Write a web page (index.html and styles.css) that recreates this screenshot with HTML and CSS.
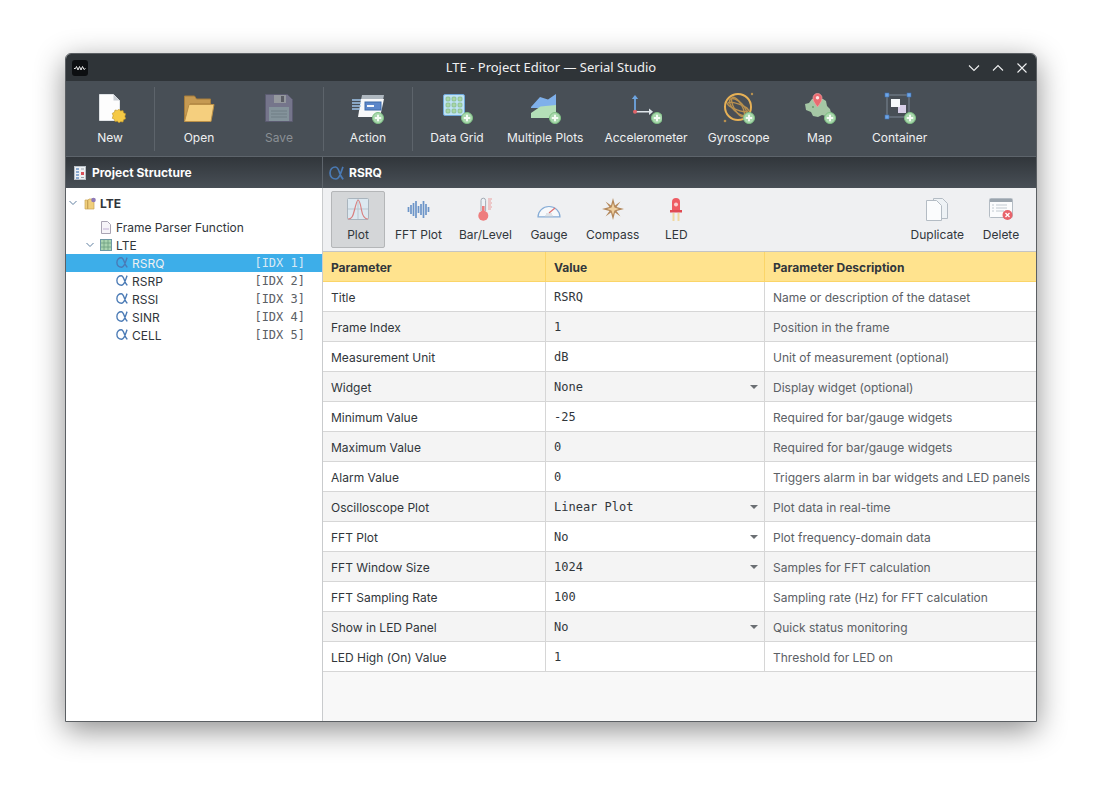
FILE: index.html
```html
<!DOCTYPE html>
<html lang="en">
<head>
<meta charset="UTF-8" />
<title>LTE - Project Editor — Serial Studio</title>
<link rel="stylesheet" href="styles.css">
</head>
<body>

<svg class="defs" width="0" height="0">
  <defs>
    <symbol id="plus" viewBox="0 0 12 12">
      <circle cx="6" cy="6" r="5.5" fill="#a9d8ad" stroke="#7fc084" stroke-width="1"/>
      <path d="M6 2.800v6.400M2.800 6h6.400" stroke="#f4fbf4" stroke-width="2"/>
    </symbol>
    <symbol id="alpha" viewBox="0 0 15 14">
      <path d="M14 .8C12.500 4 11 13 7 13 3.500 13 1 11 1 7S3.500 1 6.500 1c4 0 3.800 9.500 7.800 12.200" fill="none" stroke="#4a7ab5" stroke-width="1.700"/>
    </symbol>
  </defs>
</svg>

<div class="window">

  <div class="titlebar">
    <svg class="app-icon" width="16" height="16" viewBox="0 0 16 16">
      <rect width="16" height="16" rx="3" fill="#0d0f11"/>
      <path d="M2 8.500l1.500 0 1-2 1.500 3.500 1.500-3.500 1.500 3.500 1.500-3.500 1.500 3 1.500-1" fill="none" stroke="#e8e8e8" stroke-width="1"/>
    </svg>
    <span class="title">LTE - Project Editor — Serial Studio</span>
    <div class="controls">
      <svg width="12" height="12" viewBox="0 0 12 12"><path d="M1 3.500l5 5 5-5" fill="none" stroke="#eff0f1" stroke-width="1.100"/></svg>
      <svg width="12" height="12" viewBox="0 0 12 12"><path d="M1 8.500l5-5 5 5" fill="none" stroke="#eff0f1" stroke-width="1.100"/></svg>
      <svg width="12" height="12" viewBox="0 0 12 12"><path d="M1.500 1.500l9 9M10.500 1.500l-9 9" fill="none" stroke="#eff0f1" stroke-width="1.100"/></svg>
    </div>
  </div>

  <div class="toolbar">
    <div class="tool">
      <svg width="32" height="32" viewBox="0 0 32 32">
        <path d="M5.500 2.500h14l6 6v20h-20z" fill="#fdfdfd" stroke="#dfe3e6"/>
        <path d="M19.500 2.500v6h6z" fill="#c9ced3"/>
        <path d="M25 18l1.700 1.600 2.300-.4.600 2.300 2.100 1-.8 2.500.8 2.500-2.100 1-.6 2.300-2.300-.4L25 31.500l-1.700-1.600-2.300.4-.6-2.300-2.100-1 .8-2.500-.8-2.500 2.100-1 .6-2.300 2.300.4z" fill="#f5c945" stroke="#b8902a" stroke-width=".6" transform="translate(0 -.7)"/>
      </svg>
      <span>New</span>
    </div>
    <div class="sep"></div>
    <div class="tool">
      <svg width="32" height="32" viewBox="0 0 32 32">
        <path d="M1.500 28V4h10l2 3h14v5H7z" fill="#c69a52" stroke="#a67c3a"/>
        <path d="M1.500 29.500L6 12.500h25l-3 17z" fill="#f5cf7e" stroke="#bb9048"/>
      </svg>
      <span>Open</span>
    </div>
    <div class="tool is-off">
      <svg width="32" height="32" viewBox="0 0 32 32">
        <path d="M2.500 2.500h22l5 5v22h-27z" fill="#7d7c95" stroke="#5f5e75"/>
        <rect x="11" y="3" width="12" height="8" fill="#a2a5aa"/>
        <rect x="18" y="4" width="3" height="6" fill="#5f6068"/>
        <rect x="6" y="15" width="20" height="14" fill="#8fa0a8"/>
        <path d="M8 19h16M8 22h16M8 25h16" stroke="#76868e"/>
      </svg>
      <span>Save</span>
    </div>
    <div class="sep"></div>
    <div class="tool">
      <svg width="32" height="32" viewBox="0 0 32 32">
        <path d="M10 3h22l-1 5H9z" fill="#aeb7bf"/>
        <path d="M9 7h23l-4 18H6z" fill="#f7f8f9"/>
        <rect x="13" y="10" width="16" height="8" fill="#5b86c9" stroke="#3f6aa8"/>
        <rect x="15" y="13" width="7" height="2" fill="#f4f7fb"/>
        <path d="M0 8h9M0 11h9M0 14h9M0 17h8" stroke="#9fc5ea" stroke-width="1.600"/>
        <use href="#plus" x="20" y="20" width="12" height="12"/>
      </svg>
      <span>Action</span>
    </div>
    <div class="sep"></div>
    <div class="tool">
      <svg width="32" height="32" viewBox="0 0 32 32">
        <rect x="2.500" y="2.500" width="21" height="21" rx="1.500" fill="#bfe3f4" stroke="#6ea6d8"/>
        <g fill="#a8d6a8" stroke="#79b27e" stroke-width=".6">
          <rect x="5" y="5" width="4" height="4" rx="1"/><rect x="11" y="5" width="4" height="4" rx="1"/><rect x="17" y="5" width="4" height="4" rx="1"/>
          <rect x="5" y="11" width="4" height="4" rx="1"/><rect x="11" y="11" width="4" height="4" rx="1"/><rect x="17" y="11" width="4" height="4" rx="1"/>
          <rect x="5" y="17" width="4" height="4" rx="1"/><rect x="11" y="17" width="4" height="4" rx="1"/><rect x="17" y="17" width="4" height="4" rx="1"/>
        </g>
        <use href="#plus" x="20" y="20" width="12" height="12"/>
      </svg>
      <span>Data Grid</span>
    </div>
    <div class="tool tool-wide">
      <svg width="32" height="32" viewBox="0 0 32 32">
        <path d="M2 15l9-10 8 2.500L27 2v14H2z" fill="#7fb0ea"/>
        <path d="M2 21l9.500-6.500L27 13v13H2z" fill="#b4dfb8"/>
        <use href="#plus" x="20" y="20" width="12" height="12"/>
      </svg>
      <span>Multiple Plots</span>
    </div>
    <div class="tool">
      <svg width="32" height="32" viewBox="0 0 32 32">
        <path d="M5 20V6" stroke="#6ea5e0" stroke-width="1.800"/>
        <path d="M5 3l3.200 4h-6.400z" fill="#6ea5e0"/>
        <path d="M5 19.700h14" stroke="#dfe5ea" stroke-width="1.600"/>
        <path d="M23 19.700l-4-3.200v6.400z" fill="#dfe5ea"/>
        <circle cx="5" cy="19.700" r="2" fill="#e0646a"/>
        <use href="#plus" x="21" y="20" width="12" height="12"/>
      </svg>
      <span>Accelerometer</span>
    </div>
    <div class="tool">
      <svg width="32" height="32" viewBox="0 0 32 32">
        <circle cx="15" cy="15" r="13" fill="#4a4f55" stroke="#e7b156" stroke-width="2"/>
        <ellipse cx="15" cy="15" rx="11" ry="5" transform="rotate(45 15 15)" fill="none" stroke="#b8904f" stroke-width="1.400"/>
        <ellipse cx="15" cy="15" rx="11" ry="3" transform="rotate(20 15 15)" fill="none" stroke="#b8904f" stroke-width="1.400"/>
        <ellipse cx="15" cy="15" rx="4" ry="11" transform="rotate(-30 15 15)" fill="none" stroke="#b8904f" stroke-width="1.400"/>
        <circle cx="2" cy="29" r="1.300" fill="#b8904f"/>
        <circle cx="29" cy="2" r="1.200" fill="#b8904f"/>
        <use href="#plus" x="20" y="20" width="12" height="12"/>
      </svg>
      <span>Gyroscope</span>
    </div>
    <div class="tool">
      <svg width="32" height="32" viewBox="0 0 32 32">
        <path d="M1 12l4-1 3-4 5-1 6 1 3 2 1 5 3 3 1 4-5 3-4-1-4 2-5-1-2-4-5-2z" fill="#a5c7a5"/>
        <circle cx="9" cy="15" r="1" fill="#6b9a6f"/>
        <path d="M13.500 15c-3-4-4.500-6.500-4.500-9a4.500 4.500 0 0 1 9 0c0 2.500-1.500 5-4.500 9z" fill="#ea6a70" stroke="#f4a0a4" stroke-width=".7"/>
        <circle cx="13.500" cy="5.800" r="1.700" fill="#fbe3e3"/>
        <use href="#plus" x="20" y="20" width="12" height="12"/>
      </svg>
      <span>Map</span>
    </div>
    <div class="tool">
      <svg width="32" height="32" viewBox="0 0 32 32">
        <rect x="3" y="3" width="22" height="22" fill="none" stroke="#7b8794"/>
        <rect x="14" y="13" width="8" height="8" fill="#d8cfe8"/>
        <rect x="7" y="7" width="9" height="8" fill="#f6f9fb"/>
        <g fill="#6ea5e6" stroke="#3f6fb0" stroke-width=".6">
          <rect x="1" y="1" width="4" height="4"/><rect x="23" y="1" width="4" height="4"/><rect x="1" y="23" width="4" height="4"/>
        </g>
        <use href="#plus" x="20" y="20" width="12" height="12"/>
      </svg>
      <span>Container</span>
    </div>
  </div>

  <div class="headers">
    <div class="header-left">
      <svg width="12" height="14" viewBox="0 0 12 14">
        <rect x=".5" y=".5" width="11" height="13" fill="#eef1f4" stroke="#b9c0c7"/>
        <path d="M2 3h3M2 6h3M2 9h3M2 12h3" stroke="#6b93c4" stroke-width="1.300"/>
        <rect x="7" y="6" width="3" height="3" fill="#d9515a"/>
        <path d="M7 3h3M7 11.500h3" stroke="#9aa4ad"/>
      </svg>
      <span>Project Structure</span>
    </div>
    <div class="header-right">
      <svg width="15" height="14"><use href="#alpha"/></svg>
      <span>RSRQ</span>
    </div>
  </div>

  <div class="panes">
    <div class="tree">
      <div class="tree-row tree-root">
        <svg class="arrow" width="8" height="8" viewBox="0 0 8 8"><path d="M.5 2l3.500 3.500L7.500 2" fill="none" stroke="#5f7f9f"/></svg>
        <svg width="13" height="13" viewBox="0 0 13 13">
          <path d="M1 3h3l1-1h5v10H1z" fill="#f0cf7c" stroke="#c8a356" stroke-width=".7"/>
          <rect x="3" y="3" width="1.300" height="9" fill="#c8a356"/>
          <circle cx="9.500" cy="3" r="2.300" fill="#8e79b8"/>
        </svg>
        <span>LTE</span>
      </div>
      <div class="tree-row tree-parser">
        <svg width="12" height="13" viewBox="0 0 12 13">
          <path d="M1.500.5h6l3 3v9h-9z" fill="#f6f4f8" stroke="#a9a4b3"/>
          <path d="M3.500 8h1M5.500 8h1M7.500 8h1" stroke="#8c6db0"/>
        </svg>
        <span>Frame Parser Function</span>
      </div>
      <div class="tree-row tree-group">
        <svg class="arrow" width="8" height="8" viewBox="0 0 8 8"><path d="M.5 2l3.500 3.500L7.500 2" fill="none" stroke="#5f7f9f"/></svg>
        <svg width="12" height="12" viewBox="0 0 12 12">
          <rect x=".5" y=".5" width="11" height="11" fill="#a9d3b0" stroke="#6d98a3"/>
          <path d="M4 1v10M8 1v10M1 4h10M1 8h10" stroke="#6d9f80" stroke-width=".8"/>
        </svg>
        <span>LTE</span>
      </div>
      <div class="tree-row tree-item is-selected">
        <svg class="alpha-small" width="12" height="11"><use href="#alpha"/></svg>
        <span class="name">RSRQ</span><span class="idx">[IDX 1]</span>
      </div>
      <div class="tree-row tree-item">
        <svg class="alpha-small" width="12" height="11"><use href="#alpha"/></svg>
        <span class="name">RSRP</span><span class="idx">[IDX 2]</span>
      </div>
      <div class="tree-row tree-item">
        <svg class="alpha-small" width="12" height="11"><use href="#alpha"/></svg>
        <span class="name">RSSI</span><span class="idx">[IDX 3]</span>
      </div>
      <div class="tree-row tree-item">
        <svg class="alpha-small" width="12" height="11"><use href="#alpha"/></svg>
        <span class="name">SINR</span><span class="idx">[IDX 4]</span>
      </div>
      <div class="tree-row tree-item">
        <svg class="alpha-small" width="12" height="11"><use href="#alpha"/></svg>
        <span class="name">CELL</span><span class="idx">[IDX 5]</span>
      </div>
    </div>

    <div class="editor">
      <div class="widgets">
        <div class="widget is-active">
          <svg width="24" height="24" viewBox="0 0 24 24">
            <rect x="1.500" y="1.500" width="21" height="21" rx="1" fill="#dce8f0" stroke="#a9b4bd"/>
            <path d="M2 12h20M12 2v20" stroke="#b9c6d0"/>
            <path d="M2 22c4 0 5-3 6.500-9S11 3 12 3s2.500 4 3.500 10 2.500 9 6.500 9" fill="none" stroke="#d97f7f" stroke-width="1.200"/>
          </svg>
          <span>Plot</span>
        </div>
        <div class="widget">
          <svg width="24" height="24" viewBox="0 0 24 24">
            <path d="M2.500 10v5M5 8v9M7.500 6v13M10 4v17M12.500 9v7M15 7v11M17.500 4v17M20 7v11M22.500 10v5" stroke="#6c94c8" stroke-width="1.700"/>
          </svg>
          <span>FFT Plot</span>
        </div>
        <div class="widget">
          <svg width="24" height="24" viewBox="0 0 24 24">
            <path d="M8 14V3.500a2.300 2.300 0 0 1 4.600 0V14" fill="#eef2f6" stroke="#a4acb5"/>
            <path d="M9 9h2.600v8H9z" fill="#ee7d7d"/>
            <circle cx="10.300" cy="18.700" r="5" fill="#ee7d7d"/>
            <path d="M15 2h4M15 4h3M15 6h4M15 8h3M15 10h4M15 12h3" stroke="#e9a0a0"/>
          </svg>
          <span>Bar/Level</span>
        </div>
        <div class="widget">
          <svg width="24" height="24" viewBox="0 0 24 24">
            <path d="M1 21.500a11 11 0 1 1 22 0z" fill="#f7f9fb" stroke="#86acd6" stroke-width="1.200" transform="translate(0 -.5) scale(1 .95)"/>
            <path d="M12 16l6-5" stroke="#dd7272" stroke-width="1.200"/>
            <path d="M8 19h8M9 17h6" stroke="#c6cdd3"/>
          </svg>
          <span>Gauge</span>
        </div>
        <div class="widget">
          <svg width="24" height="24" viewBox="0 0 24 24">
            <path d="M12 1l2 7.500 5.500-4-4 5.500 7.500 2-7.500 2 4 5.500-5.500-4-2 7.500-2-7.500-5.500 4 4-5.500L1 12l7.500-2-4-5.500 5.500 4z" fill="#b3875a"/>
            <path d="M12 6l1.500 4.500L18 12l-4.500 1.500L12 18l-1.500-4.500L6 12l4.500-1.500z" fill="#efcf9f"/>
          </svg>
          <span>Compass</span>
        </div>
        <div class="widget">
          <svg width="24" height="24" viewBox="0 0 24 24">
            <path d="M8 15V5a4 4 0 0 1 8 0v10z" fill="#ee5c64"/>
            <rect x="6" y="13" width="12" height="2.500" fill="#e04a52"/>
            <circle cx="12" cy="7.500" r="2" fill="#fbd0d0"/>
            <path d="M9.500 16v8M14.500 16v8" stroke="#f0d9a0" stroke-width="2"/>
          </svg>
          <span>LED</span>
        </div>
        <div class="widget-space"></div>
        <div class="widget">
          <svg width="24" height="24" viewBox="0 0 24 24">
            <path d="M8.500 1.500h9l5 5v15h-14z" fill="#eef2f5" stroke="#b4bcc4"/>
            <path d="M1.500 3.500h10l5 5v15h-15z" fill="#fbfcfd" stroke="#b4bcc4"/>
          </svg>
          <span>Duplicate</span>
        </div>
        <div class="widget">
          <svg width="24" height="24" viewBox="0 0 24 24">
            <rect x=".5" y="1.500" width="23" height="19" rx="1" fill="#fbfcfd" stroke="#b4bcc4"/>
            <rect x="1" y="2" width="22" height="3" fill="#9aa4ad"/>
            <path d="M3 8h2M3 11h2M3 14h2M7 8h11M7 11h11M7 14h8" stroke="#c2cad1"/>
            <circle cx="18.500" cy="18" r="5" fill="#e8636b"/>
            <path d="M16.500 16l4 4M20.500 16l-4 4" stroke="#fff" stroke-width="1.300"/>
          </svg>
          <span>Delete</span>
        </div>
      </div>

      <table class="params">
        <colgroup><col class="col-a"><col class="col-b"><col class="col-c"></colgroup>
        <thead>
          <tr><th>Parameter</th><th>Value</th><th>Parameter Description</th></tr>
        </thead>
        <tbody>
          <tr><td>Title</td><td class="val">RSRQ</td><td class="desc">Name or description of the dataset</td></tr>
          <tr><td>Frame Index</td><td class="val">1</td><td class="desc">Position in the frame</td></tr>
          <tr><td>Measurement Unit</td><td class="val">dB</td><td class="desc">Unit of measurement (optional)</td></tr>
          <tr><td>Widget</td><td class="val combo">None</td><td class="desc">Display widget (optional)</td></tr>
          <tr><td>Minimum Value</td><td class="val">-25</td><td class="desc">Required for bar/gauge widgets</td></tr>
          <tr><td>Maximum Value</td><td class="val">0</td><td class="desc">Required for bar/gauge widgets</td></tr>
          <tr><td>Alarm Value</td><td class="val">0</td><td class="desc">Triggers alarm in bar widgets and LED panels</td></tr>
          <tr><td>Oscilloscope Plot</td><td class="val combo">Linear Plot</td><td class="desc">Plot data in real-time</td></tr>
          <tr><td>FFT Plot</td><td class="val combo">No</td><td class="desc">Plot frequency-domain data</td></tr>
          <tr><td>FFT Window Size</td><td class="val combo">1024</td><td class="desc">Samples for FFT calculation</td></tr>
          <tr><td>FFT Sampling Rate</td><td class="val">100</td><td class="desc">Sampling rate (Hz) for FFT calculation</td></tr>
          <tr><td>Show in LED Panel</td><td class="val combo">No</td><td class="desc">Quick status monitoring</td></tr>
          <tr><td>LED High (On) Value</td><td class="val">1</td><td class="desc">Threshold for LED on</td></tr>
        </tbody>
      </table>
    </div>
  </div>

</div>

</body>
</html>
```

FILE: styles.css
```css
:root {
  --text: #31363b;
  --muted: #5b6065;
  --line: #d6d6d6;
  --light: #eff0f1;
}
* {
  box-sizing: border-box;
}
html, body {
  height: 100%;
}
body {
  margin: 0;
  padding: 53px 65px 78px 65px;
  background: #fff;
  font-family: Inter, "Noto Sans", sans-serif;
  font-size: 12px;
  color: var(--text);
  overflow: hidden;
}
.defs {
  display: block;
  height: 0;
}
.window {
  height: 669px;
  display: flex;
  flex-direction: column;
  border: 1px solid #5b5f63;
  border-radius: 6px 6px 0 0;
  background: #f8f8f8;
  box-shadow: 0 8px 30px rgba(0, 0, 0, .45);
  overflow: hidden;
}

/* title bar */
.titlebar {
  height: 27px;
  flex: none;
  display: grid;
  grid-template-columns: 1fr auto 1fr;
  align-items: center;
  padding: 0 8px 0 6px;
  background: #2f3438;
}
.title {
  margin: -2px 0 0 2px;
  font-family: "Noto Sans", sans-serif;
  font-size: 13px;
  color: var(--light);
}
.controls {
  display: flex;
  justify-content: flex-end;
  gap: 12px;
}
.controls svg {
  display: block;
}

/* main toolbar */
.toolbar {
  height: 76px;
  flex: none;
  display: flex;
  gap: 8px;
  padding: 6px 0 5px 8px;
  background: #484f56;
  border-bottom: 1px solid #5d646b;
}
.tool {
  min-width: 72px;
  padding: 5px 6px 0;
  display: flex;
  flex-direction: column;
  align-items: center;
  gap: 6px;
  color: var(--light);
  white-space: nowrap;
}
.tool-wide {
  margin-right: 1px;
}
.tool span {
  line-height: 16px;
}
.tool.is-off span {
  color: #8b9095;
}
.tool.is-off svg {
  opacity: .85;
}
.sep {
  width: 1px;
  background: #5d646b;
}

/* section headers */
.headers {
  height: 31px;
  flex: none;
  display: flex;
  background: linear-gradient(#31363b, #484f56);
  color: #fcfcfc;
  font-weight: 700;
}
.header-left {
  width: 257px;
  display: flex;
  align-items: center;
  gap: 6px;
  padding-left: 8px;
  border-right: 1px solid #5d646b;
}
.header-right {
  flex: 1;
  display: flex;
  align-items: center;
  gap: 5px;
  padding-left: 6px;
}

.panes {
  flex: 1;
  display: flex;
  min-height: 0;
}

/* project tree */
.tree {
  width: 257px;
  flex: none;
  padding-top: 6px;
  background: #fff;
  border-right: 1px solid #c9cbcd;
}
.tree-row {
  height: 18px;
  display: flex;
  align-items: center;
  white-space: nowrap;
}
.arrow {
  margin-right: 2px;
}
.tree-root {
  padding-left: 3px;
  gap: 3px;
  margin-bottom: 6px;
  font-weight: 700;
}
.tree-root .arrow {
  margin-right: 4px;
}
.tree-parser {
  padding-left: 34px;
  gap: 4px;
}
.tree-group {
  padding-left: 20px;
  gap: 4px;
}
.tree-item {
  padding: 0 17px 0 50px;
  gap: 4px;
}
.alpha-small {
  margin-top: -1px;
}
.tree-item .name {
  flex: 1;
}
.idx {
  font-family: "DejaVu Sans Mono", monospace;
  font-size: 12px;
  color: #5b6065;
}
.tree-item.is-selected {
  background: #3daee9;
  color: #eff0f1;
}
.is-selected .idx {
  color: #d7e9f5;
}

/* editor */
.editor {
  flex: 1;
  min-width: 0;
  display: flex;
  flex-direction: column;
}
.widgets {
  flex: none;
  height: 64px;
  display: flex;
  gap: 3px;
  padding: 3px 8px 0;
  background: #eff0f2;
  border-bottom: 1px solid #c4c4c4;
}
.widget-space {
  flex: 1;
}
.widget {
  min-width: 54px;
  height: 57px;
  padding: 5px 6px 4px;
  display: flex;
  flex-direction: column;
  align-items: center;
  gap: 6px;
  border: 1px solid transparent;
  border-radius: 2px;
  white-space: nowrap;
}
.widget span {
  line-height: 16px;
}
.widget.is-active {
  background: #d4d6d8;
  border-color: #b4b6b8;
}

/* parameters */
.params {
  width: 713px;
  table-layout: fixed;
  border-collapse: separate;
  border-spacing: 0;
  flex: none;
}
.col-a {
  width: 223px;
}
.col-b {
  width: 219px;
}
.params th {
  height: 30px;
  padding: 1px 8px 0;
  text-align: left;
  font-weight: 700;
  background: #ffe38e;
  border-right: 1px solid #fbd568;
  border-bottom: 1px solid #fbd568;
}
.params td {
  height: 30px;
  padding: 1px 8px 0;
  border-right: 1px solid var(--line);
  border-bottom: 1px solid var(--line);
  white-space: nowrap;
}
.params th:last-child, .params td:last-child {
  border-right: 0;
}
.params tbody tr:nth-child(odd) {
  background: #fff;
}
.params tbody tr:nth-child(even) {
  background: #f4f4f4;
}
.val {
  font-family: "DejaVu Sans Mono", monospace;
  font-size: 12px;
}
.desc {
  color: var(--muted);
}
.combo {
  position: relative;
}
.combo::after {
  content: "";
  position: absolute;
  right: 6px;
  top: 13px;
  border: 4px solid transparent;
  border-top: 4px solid #6b6f73;
  border-bottom: 0;
}
```
